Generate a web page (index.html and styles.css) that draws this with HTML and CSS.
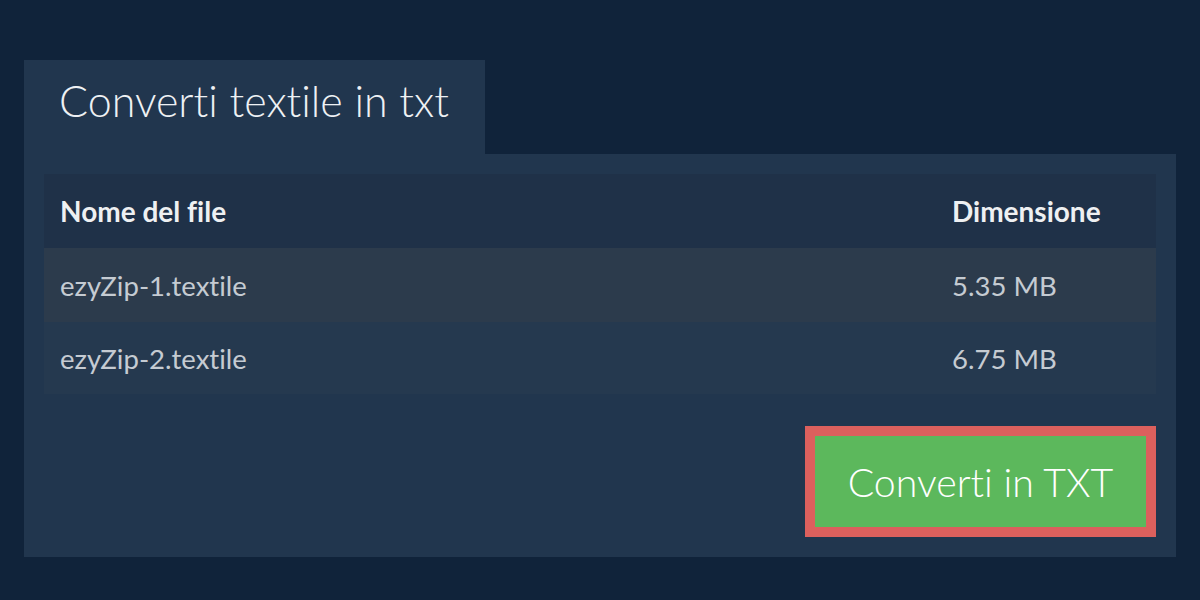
FILE: index.html
```html
<!DOCTYPE html>
<html lang="it">
<head>
<meta charset="utf-8">
<title>Converti textile in txt</title>
<link rel="stylesheet" href="styles.css">
</head>
<body>
<div class="page">
  <div class="tab">Converti textile in txt</div>
  <div class="panel">
    <div class="table">
      <div class="row head">
        <div class="cell">Nome del file</div>
        <div class="cell">Dimensione</div>
      </div>
      <div class="row odd">
        <div class="cell">ezyZip-1.textile</div>
        <div class="cell">5.35 MB</div>
      </div>
      <div class="row even">
        <div class="cell">ezyZip-2.textile</div>
        <div class="cell">6.75 MB</div>
      </div>
    </div>
    <div class="actions">
      <button class="convert">Converti in TXT</button>
    </div>
  </div>
</div>
</body>
</html>
```

FILE: styles.css
```css
html, body {
  margin: 0;
  padding: 0;
  background: #10233a;
  width: 1200px;
  height: 600px;
  overflow: hidden;
  font-family: Lato, "Liberation Sans", sans-serif;
  font-variant-ligatures: none;
}
.page {
  padding: 60px 24px 0 24px;
}
.tab {
  display: inline-block;
  box-sizing: border-box;
  width: 461px;
  height: 94px;
  background: #21364e;
  color: #eef1f4;
  font-weight: 300;
  font-size: 43px;
  padding: 18px 0 0 35px;
  line-height: 46px;
}
.panel {
  background: #21364e;
  padding: 20px 20px 20px 20px;
  height: 363px;
}
.table {
  display: flex;
  flex-direction: column;
}
.row {
  display: grid;
  grid-template-columns: 1fr 220px;
  align-items: center;
}
.head {
  height: 74px;
  background: #1f3148;
  color: #eef0f2;
  font-weight: 700;
  font-size: 28px;
}
.odd {
  height: 74px;
  background: #2c3b4c;
  color: #c5cbd2;
  font-size: 27.5px;
}
.even {
  height: 72px;
  background: #25394f;
  color: #c5cbd2;
  font-size: 27.5px;
}
.cell {
  padding-left: 16px;
}
.actions {
  display: flex;
  justify-content: flex-end;
  margin-top: 32px;
}
.convert {
  box-sizing: border-box;
  width: 351px;
  height: 111px;
  background: #5cb85c;
  border: 10px solid #dc605d;
  color: #ffffff;
  font-family: Lato, "Liberation Sans", sans-serif;
  font-variant-ligatures: none;
  font-weight: 300;
  font-size: 39.3px;
  padding: 0;
  cursor: pointer;
}
```
